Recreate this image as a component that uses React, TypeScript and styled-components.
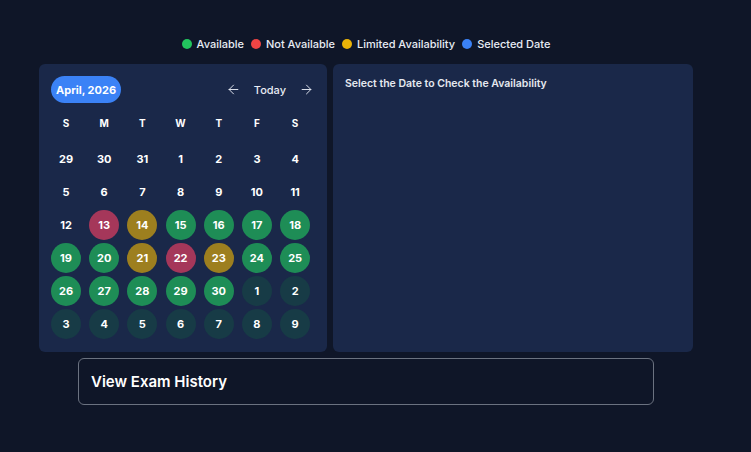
import React, { useState } from "react";
import styled, { createGlobalStyle } from "styled-components";
import { ArrowLeft, ArrowRight } from "lucide-react";

const GlobalStyle = createGlobalStyle`
  html, body {
    margin: 0;
    padding: 0;
    background: #0f1628;
    font-family: Inter, "Noto Sans", sans-serif;
    color: #ffffff;
  }
`;

const Page = styled.div`
  width: 732px;
  min-height: 452px;
  display: flex;
  flex-direction: column;
  align-items: center;
  padding-top: 36px;
  box-sizing: border-box;
`;

const Legend = styled.div`
  display: flex;
  align-items: center;
  gap: 7px;
  height: 16px;
  margin-bottom: 12px;
`;

const LegendItem = styled.div`
  display: flex;
  align-items: center;
  gap: 5px;
  font-size: 11px;
  font-weight: 500;
  color: #e8ecf4;
`;

const Dot = styled.span<{ $color: string }>`
  width: 10px;
  height: 10px;
  border-radius: 50%;
  background: ${(p) => p.$color};
`;

const Panels = styled.div`
  display: flex;
  gap: 6px;
`;

const Card = styled.div`
  background: #1a2849;
  border-radius: 6px;
  box-sizing: border-box;
  height: 288px;
`;

const CalendarCard = styled(Card)`
  width: 288px;
  padding: 12px 12px 0 12px;
`;

const InfoCard = styled(Card)`
  width: 360px;
  padding: 13px 12px;
  font-size: 10.5px;
  font-weight: 600;
  color: #e5e8ef;
`;

const CalHeader = styled.div`
  display: flex;
  align-items: center;
  justify-content: space-between;
  height: 27px;
  padding-right: 1px;
`;

const MonthPill = styled.div`
  background: #3b82f6;
  border-radius: 14px;
  height: 27px;
  padding: 0 5px;
  display: flex;
  align-items: center;
  font-size: 11px;
  font-weight: 700;
`;

const Nav = styled.div`
  display: flex;
  align-items: center;
  gap: 13px;
  font-size: 11px;
  font-weight: 500;
  color: #e8ecf4;
  svg {
    color: #e8ecf4;
  }
`;

const Grid = styled.div`
  display: grid;
  grid-template-columns: repeat(7, 30px);
  column-gap: 8.2px;
`;

const WeekRow = styled(Grid)`
  margin-top: 10px;
  height: 20px;
  align-items: center;
`;

const WeekDay = styled.div`
  text-align: center;
  font-size: 10px;
  font-weight: 700;
`;

const Days = styled(Grid)`
  margin-top: 11px;
  row-gap: 3px;
`;

const dayColors: Record<string, string> = {
  none: "transparent",
  green: "#1e8d56",
  red: "#a5375a",
  gold: "#9d7f1f",
  next: "#173b46",
};

const Day = styled.div<{ $kind: string }>`
  width: 30px;
  height: 30px;
  border-radius: 50%;
  background: ${(p) => dayColors[p.$kind]};
  display: flex;
  align-items: center;
  justify-content: center;
  font-size: 11px;
  font-weight: 700;
  cursor: pointer;
`;

const HistoryButton = styled.button`
  margin-top: 6px;
  width: 576px;
  height: 47px;
  background: #0f1628;
  border: 1px solid #6b7280;
  border-radius: 6px;
  color: #ffffff;
  font-family: inherit;
  font-size: 15px;
  font-weight: 600;
  text-align: left;
  padding: 0 12px;
`;

const kinds: Record<number, string> = {
  13: "red",
  14: "gold",
  15: "green",
  16: "green",
  17: "green",
  18: "green",
  19: "green",
  20: "green",
  21: "gold",
  22: "red",
  23: "gold",
  24: "green",
  25: "green",
  26: "green",
  27: "green",
  28: "green",
  29: "green",
  30: "green",
};

const days: { n: number; kind: string }[] = [
  ...[29, 30, 31].map((n) => ({ n, kind: "none" })),
  ...Array.from({ length: 30 }, (_, i) => ({ n: i + 1, kind: kinds[i + 1] || "none" })),
  ...Array.from({ length: 9 }, (_, i) => ({ n: i + 1, kind: "next" })),
];

export default function App() {
  const [selected, setSelected] = useState<number | null>(null);

  return (
    <>
      <GlobalStyle />
      <Page>
        <Legend>
          <LegendItem><Dot $color="#22c55e" />Available</LegendItem>
          <LegendItem><Dot $color="#ef4444" />Not Available</LegendItem>
          <LegendItem><Dot $color="#eab308" />Limited Availability</LegendItem>
          <LegendItem><Dot $color="#3b82f6" />Selected Date</LegendItem>
        </Legend>
        <Panels>
          <CalendarCard>
            <CalHeader>
              <MonthPill>April, 2026</MonthPill>
              <Nav>
                <ArrowLeft size={15} strokeWidth={1.5} />
                Today
                <ArrowRight size={15} strokeWidth={1.5} />
              </Nav>
            </CalHeader>
            <WeekRow>
              {["S", "M", "T", "W", "T", "F", "S"].map((d, i) => (
                <WeekDay key={i}>{d}</WeekDay>
              ))}
            </WeekRow>
            <Days>
              {days.map((d, i) => (
                <Day key={i} $kind={d.kind} onClick={() => setSelected(i)}>
                  {d.n}
                </Day>
              ))}
            </Days>
          </CalendarCard>
          <InfoCard>
            {selected === null ? "Select the Date to Check the Availability" : "Select the Date to Check the Availability"}
          </InfoCard>
        </Panels>
        <HistoryButton>View Exam History</HistoryButton>
      </Page>
    </>
  );
}
